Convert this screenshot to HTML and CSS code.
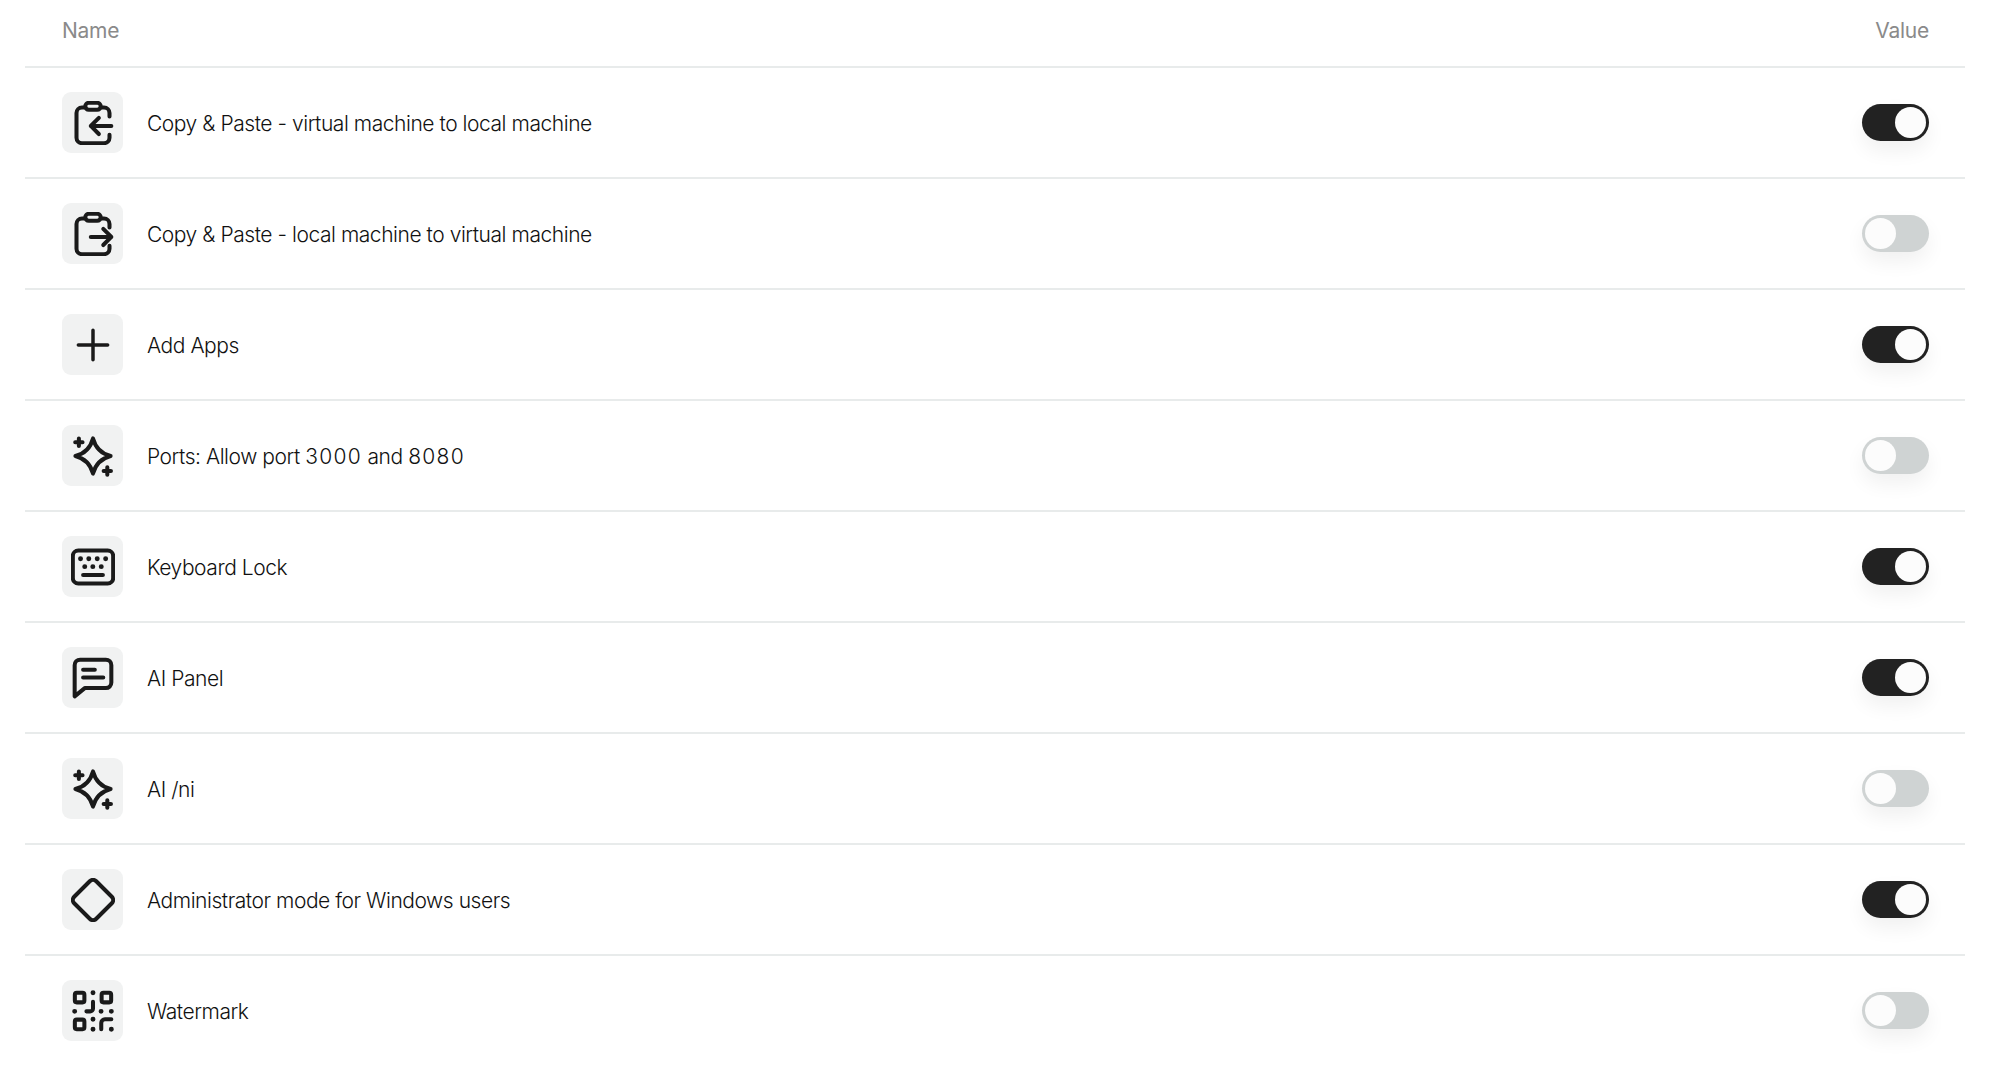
FILE: index.html
```html
<!DOCTYPE html>
<html lang="en">
<head>
    <meta charset="UTF-8">
    <title>Settings</title>
    <link rel="stylesheet" href="styles.css">
</head>
<body>
    <div class="settings-table">
        <div class="table-head">
            <span>Name</span>
            <span>Value</span>
        </div>

        <div class="row">
            <div class="icon-box">
                <svg class="icon" viewBox="0 0 24 24"><path d="M7.8 3.6H6a3 3 0 0 0-3 3V20a3 3 0 0 0 3 3h12a3 3 0 0 0 3-3v-1.6M16.2 3.6H18a3 3 0 0 1 3 3v1.8"/><rect x="7.8" y="1" width="8.4" height="3.8" rx="1.9"/><path d="M22 13.6H10.8M15.2 9.2l-4.4 4.4 4.4 4.4"/></svg>
            </div>
            <span class="row-label">Copy &amp; Paste - virtual machine to local machine</span>
            <div class="toggle on"><div class="knob"></div></div>
        </div>

        <div class="row">
            <div class="icon-box">
                <svg class="icon" viewBox="0 0 24 24"><path d="M7.8 3.6H6a3 3 0 0 0-3 3V20a3 3 0 0 0 3 3h12a3 3 0 0 0 3-3v-1.6M16.2 3.6H18a3 3 0 0 1 3 3v1.8"/><rect x="7.8" y="1" width="8.4" height="3.8" rx="1.9"/><path d="M10.8 13.6H22M17.6 9.2l4.4 4.4-4.4 4.4"/></svg>
            </div>
            <span class="row-label">Copy &amp; Paste - local machine to virtual machine</span>
            <div class="toggle"><div class="knob"></div></div>
        </div>

        <div class="row">
            <div class="icon-box">
                <svg class="icon icon-thin" viewBox="0 0 24 24"><path d="M12 4v16M4 12h16"/></svg>
            </div>
            <span class="row-label">Add Apps</span>
            <div class="toggle on"><div class="knob"></div></div>
        </div>

        <div class="row">
            <div class="icon-box">
                <svg class="icon" viewBox="0 0 24 24"><path d="M12 2.4Q14 10 21.6 12 14 14 12 21.6 10 14 2.4 12 10 10 12 2.4Z"/><path d="M4.3 2.5v4M2.3 4.5h4M19.8 18.2v4M17.8 20.2h4"/></svg>
            </div>
            <span class="row-label">Ports: Allow port <span class="num">3000</span> and <span class="num">8080</span></span>
            <div class="toggle"><div class="knob"></div></div>
        </div>

        <div class="row">
            <div class="icon-box">
                <svg class="icon" viewBox="0 0 24 24"><rect x="1" y="3" width="22" height="18" rx="3"/><path d="M6.6 16.4h10.8"/><path class="dots" d="M5.2 7.5h0M9.7 7.5h0M14.3 7.5h0M18.9 7.5h0M7.5 11.8h0M11.9 11.8h0M16.5 11.8h0"/></svg>
            </div>
            <span class="row-label">Keyboard Lock</span>
            <div class="toggle on"><div class="knob"></div></div>
        </div>

        <div class="row">
            <div class="icon-box">
                <svg class="icon" viewBox="0 0 24 24"><path d="M2 5a3 3 0 0 1 3-3h14a3 3 0 0 1 3 3v9.5a3 3 0 0 1-3 3H7.5L2 22Z"/><path d="M6.6 7.5H13M6.6 11.7h11"/></svg>
            </div>
            <span class="row-label">AI Panel</span>
            <div class="toggle on"><div class="knob"></div></div>
        </div>

        <div class="row">
            <div class="icon-box">
                <svg class="icon" viewBox="0 0 24 24"><path d="M12 2.4Q14 10 21.6 12 14 14 12 21.6 10 14 2.4 12 10 10 12 2.4Z"/><path d="M4.3 2.5v4M2.3 4.5h4M19.8 18.2v4M17.8 20.2h4"/></svg>
            </div>
            <span class="row-label">AI /ni</span>
            <div class="toggle"><div class="knob"></div></div>
        </div>

        <div class="row">
            <div class="icon-box">
                <svg class="icon" viewBox="0 0 24 24"><rect x="3.5" y="3.5" width="17" height="17" rx="2.5" transform="rotate(45 12 12)"/></svg>
            </div>
            <span class="row-label">Administrator mode for Windows users</span>
            <div class="toggle on"><div class="knob"></div></div>
        </div>

        <div class="row">
            <div class="icon-box">
                <svg class="icon" viewBox="0 0 24 24"><rect x="2.1" y="2.1" width="5.2" height="5.2" rx="1"/><rect x="16.7" y="2.1" width="5.2" height="5.2" rx="1"/><rect x="2.1" y="16.7" width="5.2" height="5.2" rx="1"/><path d="M12 7v3.6a1.6 1.6 0 0 1-1.6 1.6H8.4M16.5 22v-3.5a2 2 0 0 1 2-2H22"/><path class="dots" d="M12 2h0M2 12.2h0M16.4 12.2h0M22 12.2h0M12 16.5h0M12 22h0M22 22h0"/></svg>
            </div>
            <span class="row-label">Watermark</span>
            <div class="toggle"><div class="knob"></div></div>
        </div>
    </div>
</body>
</html>
```
FILE: styles.css
```css
body { margin: 0; background: #fff; font-family: Inter, "Liberation Sans", sans-serif; color: #111; }
.settings-table { margin-left: 25px; width: 1940px; }
.table-head { display: flex; justify-content: space-between; align-items: center; height: 61px; padding: 0 36px 5px 37px; font-size: 21px; letter-spacing: -0.25px; color: #8a8a8a; border-bottom: 2px solid #e8ebeb; }
.row { display: flex; align-items: center; height: 109px; padding: 0 36px 0 37px; border-bottom: 2px solid #e8ebeb; }
.row:last-child { border-bottom: none; }
.icon-box { width: 61px; height: 61px; border-radius: 9px; background: #f1f2f2; display: flex; align-items: center; justify-content: center; flex-shrink: 0; }
.icon { width: 44px; height: 44px; fill: none; stroke: #1a1a1a; stroke-width: 2.2; stroke-linecap: round; stroke-linejoin: round; }
.icon-thin { stroke-width: 1.9; }
.dots { stroke-width: 2.7; }
.row-label { margin-left: 24px; padding-top: 2px; flex: 1; font-size: 21px; font-weight: 350; letter-spacing: -0.45px; }
.num { letter-spacing: 1.3px; }
.toggle { width: 67px; height: 37px; border-radius: 19px; background: #cfd3d3; display: flex; align-items: center; padding: 0 3px; box-sizing: border-box; box-shadow: 0 10px 20px rgba(0, 0, 0, 0.06); }
.toggle.on { background: #222; justify-content: flex-end; }
.knob { width: 31px; height: 31px; border-radius: 50%; background: #fcfcfc; }
```
